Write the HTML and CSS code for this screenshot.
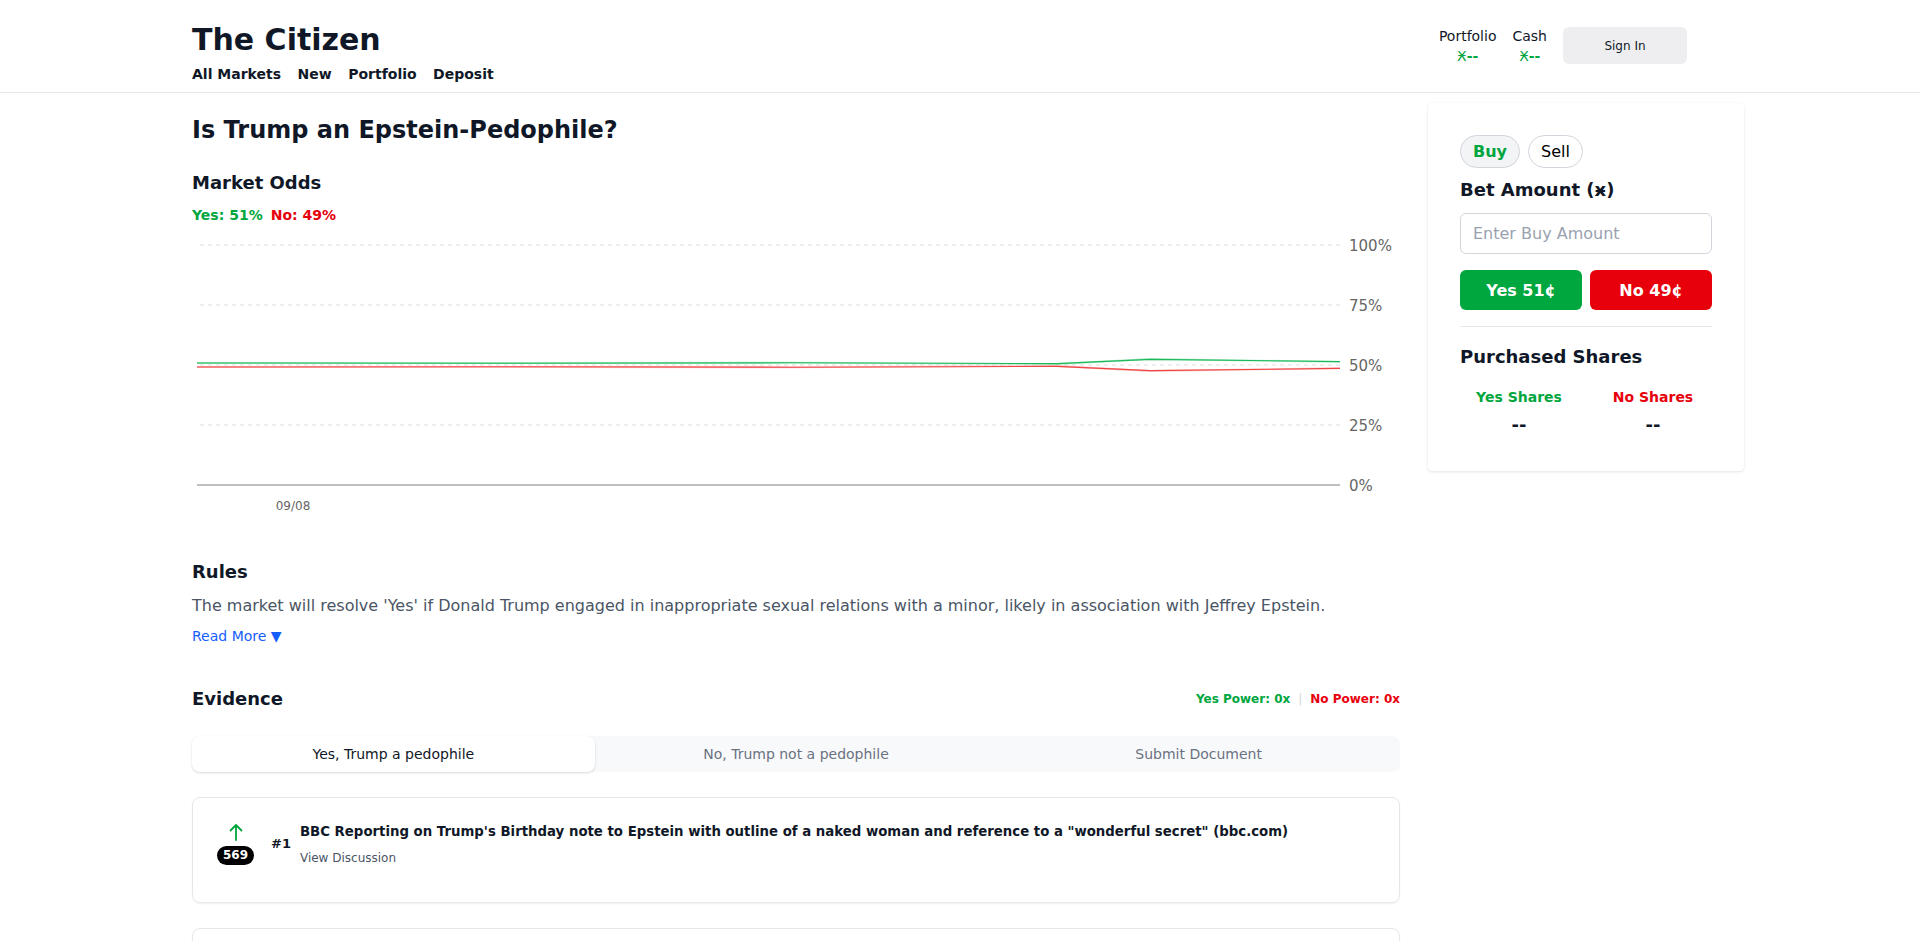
FILE: index.html
```html
<!DOCTYPE html>
<html lang="en">
<head>
<meta charset="utf-8">
<title>The Citizen</title>
<link rel="stylesheet" href="styles.css">
</head>
<body>
<header class="site-header">
  <div class="header-inner">
    <div class="brand">
      <div class="logo">The Citizen</div>
      <nav class="nav">
        <a href="#">All Markets</a>
        <a href="#">New</a>
        <a href="#">Portfolio</a>
        <a href="#">Deposit</a>
      </nav>
    </div>
    <div class="account">
      <div class="stat"><div class="stat-label">Portfolio</div><div class="stat-value"><span class="cur">Ӿ</span>--</div></div>
      <div class="stat"><div class="stat-label">Cash</div><div class="stat-value"><span class="cur">Ӿ</span>--</div></div>
      <button class="signin">Sign In</button>
    </div>
  </div>
</header>

<main class="page">
  <section class="market">
    <h1 class="market-title">Is Trump an Epstein-Pedophile?</h1>
    <h2 class="section-title">Market Odds</h2>
    <div class="odds"><span class="yes">Yes: 51%</span><span class="no">No: 49%</span></div>

    <svg class="chart" width="1208" height="300" viewBox="0 0 1208 300">
      <g class="grid">
        <line x1="8" y1="15" x2="1148" y2="15"/>
        <line x1="8" y1="75" x2="1148" y2="75"/>
        <line x1="8" y1="135" x2="1148" y2="135"/>
        <line x1="8" y1="195" x2="1148" y2="195"/>
      </g>
      <line class="axis" x1="5" y1="255" x2="1148" y2="255"/>
      <polyline class="line-yes-soft" points="5,133 300,133 600,132.6 865,134 958,129 1148,131.8"/>
      <polyline class="line-yes" points="5,133 300,133.2 600,132.8 865,133.6 958,129.4 1148,131.6"/>
      <polyline class="line-no-soft" points="5,137 300,137 600,137.4 865,136 958,141 1148,138.2"/>
      <polyline class="line-no" points="5,137 300,136.8 600,137.2 865,136.4 958,140.6 1148,138.4"/>
      <g class="ylabels">
        <text x="1157" y="20.5">100%</text>
        <text x="1157" y="80.5">75%</text>
        <text x="1157" y="140.5">50%</text>
        <text x="1157" y="200.5">25%</text>
        <text x="1157" y="260.5">0%</text>
      </g>
      <text class="xlabel" x="101" y="280" text-anchor="middle">09/08</text>
    </svg>

    <section class="rules">
      <h2 class="section-title">Rules</h2>
      <p class="rules-text">The market will resolve 'Yes' if Donald Trump engaged in inappropriate sexual relations with a minor, likely in association with Jeffrey Epstein.</p>
      <a class="read-more" href="#">Read More ▼</a>
    </section>

    <section class="evidence">
      <div class="evidence-head">
        <h2 class="section-title">Evidence</h2>
        <div class="power"><span class="yes">Yes Power: 0x</span><span class="sep">|</span><span class="no">No Power: 0x</span></div>
      </div>
      <div class="tabs">
        <button class="tab active">Yes, Trump a pedophile</button>
        <button class="tab">No, Trump not a pedophile</button>
        <button class="tab">Submit Document</button>
      </div>

      <div class="doc-list">
        <article class="doc">
          <div class="vote">
            <svg class="arrow" width="14" height="18" viewBox="0 0 14 18"><path d="M7 17V2M1.5 7.5L7 2l5.5 5.5" fill="none" stroke="#00a63e" stroke-width="1.8" stroke-linecap="round" stroke-linejoin="round"/></svg>
            <span class="count">569</span>
          </div>
          <div class="rank">#1</div>
          <div class="doc-body">
            <div class="doc-title">BBC Reporting on Trump's Birthday note to Epstein with outline of a naked woman and reference to a "wonderful secret" (bbc.com)</div>
            <a class="discuss" href="#">View Discussion</a>
          </div>
        </article>
        <article class="doc doc-next" aria-hidden="true"></article>
      </div>
    </section>
  </section>

  <aside class="trade-card">
    <div class="mode">
      <button class="pill active">Buy</button>
      <button class="pill">Sell</button>
    </div>
    <h3 class="card-title bet">Bet Amount (ӿ)</h3>
    <input class="amount" type="text" placeholder="Enter Buy Amount">
    <div class="actions">
      <button class="act act-yes">Yes 51¢</button>
      <button class="act act-no">No 49¢</button>
    </div>
    <hr class="divider">
    <h3 class="card-title">Purchased Shares</h3>
    <div class="shares">
      <div class="share"><div class="share-label yes">Yes Shares</div><div class="share-value">--</div></div>
      <div class="share"><div class="share-label no">No Shares</div><div class="share-value">--</div></div>
    </div>
  </aside>
</main>
</body>
</html>
```

FILE: styles.css
```css
* { box-sizing: border-box; }

html, body {
  margin: 0;
  padding: 0;
  background: #ffffff;
  color: #101828;
  font-family: "DejaVu Sans", "Noto Sans", sans-serif;
}

a { color: inherit; text-decoration: none; }
button { font-family: inherit; cursor: pointer; }
h1, h2, h3, p { margin: 0; }

.yes { color: #00a63e; }
.no { color: #e7000b; }

/* Header */
.site-header {
  border-bottom: 1px solid #e5e7eb;
}
.header-inner {
  height: 92px;
  display: flex;
  justify-content: space-between;
  padding: 0 233px 0 192px;
}
.brand {
  padding-top: 22px;
}
.logo {
  font-size: 30px;
  line-height: 36px;
  font-weight: 700;
  color: #101828;
  margin-bottom: 6px;
}
.nav {
  display: flex;
  gap: 16.5px;
  font-size: 14px;
  line-height: 20px;
  font-weight: 700;
}
.account {
  display: flex;
  align-items: center;
  gap: 16px;
}
.stat {
  text-align: center;
  font-size: 14px;
  line-height: 20px;
}
.stat-label { color: #101828; }
.stat-value { color: #00a63e; font-size: 14px; font-weight: 700; }
.stat-value .cur { font-weight: 400; }
.signin {
  width: 124px;
  height: 37px;
  border: 0;
  border-radius: 6px;
  background: #eeeef0;
  color: #101828;
  font-size: 12px;
  margin-top: -1px;
}

/* Layout */
.page {
  display: grid;
  grid-template-columns: 1208px 316px;
  gap: 28px;
  align-items: start;
  padding: 10px 0 0 192px;
}

.market-title {
  margin-top: 11px;
  font-size: 24px;
  line-height: 32px;
  font-weight: 700;
  color: #101828;
  margin-bottom: 23px;
}
.section-title {
  font-size: 18px;
  line-height: 28px;
  font-weight: 700;
  color: #101828;
}
.odds {
  margin-top: 8px;
  display: flex;
  gap: 8px;
  font-size: 14px;
  line-height: 20px;
  font-weight: 700;
}

/* Chart */
.chart {
  display: block;
  margin-top: 5px;
}
.grid line {
  stroke: #dddddd;
  stroke-width: 1.2;
  stroke-dasharray: 4 4;
}
.axis {
  stroke: #aaaaaa;
  stroke-width: 1.6;
}
.line-yes { fill: none; stroke: #1cb85a; stroke-width: 1.1; }
.line-yes-soft { fill: none; stroke: #86e0a8; stroke-width: 1.8; opacity: 0.6; }
.line-no { fill: none; stroke: #ef4444; stroke-width: 1.1; }
.line-no-soft { fill: none; stroke: #f9a3a3; stroke-width: 1.8; opacity: 0.6; }
.ylabels text {
  font-family: "DejaVu Sans", sans-serif;
  font-size: 15px;
  fill: #666666;
}
.xlabel {
  font-family: "DejaVu Sans", sans-serif;
  font-size: 12px;
  fill: #666666;
}

/* Rules */
.rules {
  margin-top: 27.5px;
}
.rules-text {
  margin-top: 8px;
  font-size: 16px;
  line-height: 24px;
  color: #4a5565;
}
.read-more {
  display: inline-block;
  margin-top: 8px;
  font-size: 14px;
  line-height: 20px;
  color: #155dfc;
}

/* Evidence */
.evidence {
  margin-top: 39px;
}
.evidence-head {
  display: flex;
  justify-content: space-between;
  align-items: center;
}
.power {
  font-size: 12px;
  line-height: 16px;
  font-weight: 700;
}
.power .sep {
  color: #d1d5dc;
  font-weight: 400;
  margin: 0 8px;
}
.tabs {
  margin-top: 23px;
  display: grid;
  grid-template-columns: repeat(3, 1fr);
  background: #f8f9fb;
  border-radius: 8px;
}
.tab {
  height: 36px;
  border: 0;
  background: transparent;
  font-size: 14px;
  line-height: 20px;
  color: #6a7282;
  border-radius: 8px;
}
.tab.active {
  background: #ffffff;
  color: #101828;
  box-shadow: 0 1px 3px rgba(0, 0, 0, 0.1), 0 1px 2px rgba(0, 0, 0, 0.06);
}

.doc-list {
  margin-top: 25px;
  display: flex;
  flex-direction: column;
  gap: 25px;
}
.doc {
  display: flex;
  align-items: center;
  border: 1px solid #e5e7eb;
  border-radius: 8px;
  padding: 24px 24px 36px 24px;
  box-shadow: 0 1px 2px rgba(0, 0, 0, 0.06);
}
.doc-next {
  min-height: 104px;
}
.vote {
  width: 37px;
  display: flex;
  flex-direction: column;
  align-items: center;
  gap: 5px;
}
.arrow { display: block; }
.count {
  display: inline-block;
  min-width: 37px;
  height: 19px;
  padding: 0 6px;
  border-radius: 9999px;
  background: #000000;
  color: #ffffff;
  font-size: 12px;
  line-height: 19px;
  font-weight: 700;
  text-align: center;
}
.rank {
  margin-left: 17px;
  font-size: 13px;
  line-height: 20px;
  font-weight: 700;
  color: #101828;
}
.doc-body {
  margin-left: 9px;
}
.doc-title {
  font-size: 13.3px;
  line-height: 20px;
  font-weight: 700;
  color: #101828;
}
.discuss {
  display: block;
  margin-top: 8px;
  font-size: 12px;
  line-height: 16px;
  color: #4a5565;
}

/* Trade card */
.trade-card {
  background: #ffffff;
  border-radius: 4px;
  padding: 32px;
  box-shadow: 0 1px 3px rgba(0, 0, 0, 0.1), 0 0 1px rgba(0, 0, 0, 0.06);
}
.mode {
  display: flex;
  gap: 8px;
}
.pill {
  height: 33px;
  padding: 0 12px;
  border: 1px solid #d1d5dc;
  border-radius: 9999px;
  background: #ffffff;
  color: #000000;
  font-size: 16px;
  line-height: 23px;
}
.pill.active {
  background: #f3f4f6;
  color: #00a63e;
  font-weight: 700;
}
.card-title {
  font-size: 18px;
  line-height: 28px;
  font-weight: 700;
  color: #101828;
}
.card-title.bet {
  margin-top: 8px;
}
.amount {
  display: block;
  width: 100%;
  height: 41px;
  margin-top: 9px;
  padding: 0 12px;
  border: 1px solid #d1d5dc;
  border-radius: 6px;
  font-family: inherit;
  font-size: 16px;
  color: #101828;
}
.amount::placeholder { color: #99a1af; }
.actions {
  margin-top: 16px;
  display: grid;
  grid-template-columns: 1fr 1fr;
  gap: 8px;
}
.act {
  height: 40px;
  border: 0;
  border-radius: 6px;
  color: #ffffff;
  font-size: 16px;
  font-weight: 700;
}
.act-yes { background: #00a63e; }
.act-no { background: #e7000b; }
.divider {
  margin: 16px 0;
  border: 0;
  border-top: 1px solid #e5e7eb;
}
.shares {
  margin-top: 16px;
  display: grid;
  grid-template-columns: 1fr 1fr;
  gap: 16px;
  text-align: center;
}
.share-label {
  font-size: 14px;
  line-height: 20px;
  font-weight: 700;
}
.share-value {
  margin-top: 4px;
  font-size: 18px;
  line-height: 28px;
  font-weight: 700;
  color: #101828;
}
```
